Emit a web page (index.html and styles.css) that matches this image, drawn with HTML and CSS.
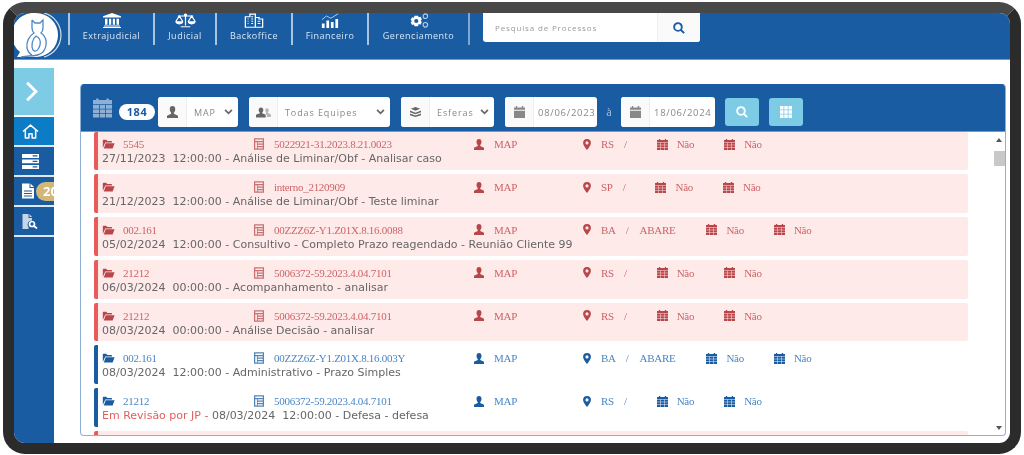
FILE: index.html
```html
<!DOCTYPE html>
<html lang="pt-BR">
<head>
<meta charset="utf-8">
<title>Processos</title>
<link rel="stylesheet" href="styles.css">
</head>
<body>
<svg class="defs" width="0" height="0" aria-hidden="true">
  <symbol id="i-folder" viewBox="0 0 16 12"><path d="M1 11V1.500C1 1 1.400.8 1.800.8h3.400l1.300 1.500h5c.5 0 .8.3.8.8v1H4L1.400 10zM2.200 11.500 4.500 5h11l-2.400 6.500z"/></symbol>
  <symbol id="i-doc" viewBox="0 0 12 14"><path fill-rule="evenodd" d="M0 0h12v14H0zM1.500 1.500v2h9v-2zM1.500 5v7.500h2V5zM4.500 5v1.500h6V5zM4.500 8v1.500h6V8zM4.500 11v1.500h6V11z"/></symbol>
  <symbol id="i-user" viewBox="0 0 12 13"><path d="M6 0c2 0 3 1.400 3 3.400 0 1.500-.7 3-1.500 3.700v1.300l4 1.800c.4.200.5.500.5 1V13H0v-1.800c0-.5.100-.8.500-1l4-1.800V7.100C3.700 6.400 3 4.900 3 3.400 3 1.400 4 0 6 0z"/></symbol>
  <symbol id="i-pin" viewBox="0 0 10 14"><path fill-rule="evenodd" d="M5 0a5 5 0 0 1 5 5c0 2.500-3 6.500-5 9-2-2.500-5-6.500-5-9a5 5 0 0 1 5-5zm0 3a2 2 0 1 0 0 4 2 2 0 0 0 0-4z"/></symbol>
  <symbol id="i-cal" viewBox="0 0 12 12"><path d="M2 0h1.500v1h5V0H10v1h2v2.600H0V1h2zM0 4.100h3.800v2.300H0zM4.300 4.100h3.400v2.300H4.300zM8.200 4.100H12v2.300H8.200zM0 6.900h3.800v2.300H0zM4.300 6.900h3.400v2.300H4.300zM8.200 6.900H12v2.300H8.200zM0 9.700h3.800V12H0zM4.300 9.700h3.400V12H4.300zM8.200 9.700H12V12H8.200z"/></symbol>
  <symbol id="i-search" viewBox="0 0 14 14"><path fill="none" stroke="currentColor" stroke-width="2.200" d="M5.800 1.300a4.500 4.500 0 1 0 0 9 4.500 4.500 0 0 0 0-9zM9 9l4 4"/></symbol>
  <symbol id="i-chev" viewBox="0 0 10 7"><path fill="none" stroke="currentColor" stroke-width="2" d="M1 1l4 4 4-4"/></symbol>
  <symbol id="i-bank" viewBox="0 0 18 18" preserveAspectRatio="none"><path d="M9 0l9 4v1.500H0V4zM2 7h2.500v7H2zM6 7h2.200v7H6zM9.800 7H12v7H9.800zM13.500 7H16v7h-2.500zM1 15h16v1.300H1zM0 16.700h18V18H0z"/></symbol>
  <symbol id="i-scale" viewBox="0 0 22 18" preserveAspectRatio="none"><path fill="none" stroke="currentColor" stroke-width="1.300" d="M11 1v14M3 3.500h16M4.500 3.500 1 10a3.500 3 0 0 0 7 0zM17.500 3.500 14 10a3.500 3 0 0 0 7 0zM6 16.500h10"/><circle cx="11" cy="2.500" r="1.800"/><path d="M1 10h7c0 4-7 4-7 0zM14 10h7c0 4-7 4-7 0z"/></symbol>
  <symbol id="i-bldg" viewBox="0 0 22 20" preserveAspectRatio="none"><path fill="none" stroke="currentColor" stroke-width="1.400" d="M1.500 19V5h5V1.500h6V19zM12.500 6h4v2h4v11h-8M4 8h1M4 11h1M4 14h1M8 5h2M8 8h2M8 11h2M8 14h2M15 11h3M15 14h3"/></symbol>
  <symbol id="i-chart" viewBox="0 0 20 20" preserveAspectRatio="none"><path d="M1 14h3v6H1zM6 10h3v10H6zM11 12h3v8h-3zM16 8h3v12h-3z"/><path fill="none" stroke="currentColor" stroke-width="1" opacity=".8" d="M1 9l5-5 5 3 8-6"/></symbol>
  <symbol id="i-gears" viewBox="1 0 20 16.500"><path fill-rule="evenodd" d="M6 3h4l.6 1.800 1.900-.6 1.700 2.800-1.400 1.500 1.400 1.500-1.700 2.800-1.900-.6L10 14.500H6l-.6-1.800-1.900.6L1.800 10.500 3.200 9 1.800 7.500l1.700-2.800 1.900.6zM8 6.500a2.300 2.300 0 1 0 0 4.600 2.300 2.300 0 0 0 0-4.600z"/><circle cx="18" cy="3.500" r="2.500" fill="none" stroke="currentColor" stroke-width="1.200" opacity=".7"/><circle cx="18" cy="13" r="2.500" fill="none" stroke="currentColor" stroke-width="1.200" opacity=".7"/></symbol>
  <symbol id="i-home" viewBox="0 0 18 16"><path fill="none" stroke="currentColor" stroke-width="1.600" stroke-linejoin="round" d="M1 8l8-6.800L17 8M3.500 6.500V15h3.800v-4.500h3.400V15h3.800V6.500"/></symbol>
  <symbol id="i-server" viewBox="0 0 16 14"><path fill-rule="evenodd" d="M0 0h16v3.600H0zM0 5h16v3.600H0zM0 10.200h16V14H0zM10 1.200v1.200h4.500V1.200zM10 6.200v1.200h4.500V6.200zM10 11.500v1.200h4.500v-1.200z"/></symbol>
  <symbol id="i-file" viewBox="0 0 12 15"><path fill-rule="evenodd" d="M0 0h7.500v4.500H12V15H0zM8.500 0 12 3.500H8.500zM2 7v1h8V7zM2 9.500v1h8v-1zM2 12v1h8v-1z"/></symbol>
  <symbol id="i-filesearch" viewBox="0 0 16 15"><path d="M0 0h6v4h3.500v2.500a4 4 0 0 0-3.500 6.500V15H0zM7 0l2.500 3H7z" opacity=".75"/><path fill="none" stroke="currentColor" stroke-width="1.700" d="M9.500 7.500a2.500 2.500 0 1 0 0 5 2.500 2.500 0 0 0 0-5zM11.500 12l3 2.500"/></symbol>
  <symbol id="i-grid" viewBox="0 0 12 12"><path d="M0 0h3.500v3.500H0zM4.250 0h3.500v3.500h-3.500zM8.500 0H12v3.500H8.500zM0 4.250h3.500v3.500H0zM4.250 4.250h3.500v3.500h-3.500zM8.500 4.250H12v3.500H8.500zM0 8.500h3.500V12H0zM4.250 8.500h3.500V12h-3.500zM8.500 8.500H12V12H8.500z"/></symbol>
  <symbol id="i-layers" viewBox="0 0 14 13"><path d="M7 0l6 2.500L7 5 1 2.500zM0 4.500l7 2.800 7-2.800v2.200L7 9.500 0 6.700zM0 8.500l7 2.500 7-2.500V10.500L7 13 0 10.500z"/></symbol>
  <symbol id="i-users" viewBox="0 0 18 13"><path d="M6 1c1.800 0 2.800 1.300 2.800 3 0 1.300-.6 2.500-1.300 3v1l3.500 1.500c.4.200.6.500.6 1V13H0v-2.500c0-.5.200-.8.600-1L4.500 8V7C3.800 6.500 3.200 5.300 3.200 4 3.200 2.300 4.200 1 6 1z"/><path opacity=".45" d="M13 2c1.500 0 2.300 1 2.300 2.500 0 1-.5 2-1 2.500v.8l3.200 1.400c.3.100.5.400.5.800V12.500h-5V10l-2-1.500 1.200-.7V7c-.5-.5-1-1.500-1-2.500C11 3 11.500 2 13 2z"/></symbol>
  <symbol id="i-calsimple" viewBox="0 0 12 13"><path d="M2 0h1.500v1.500h5V0H10v1.500h2V4H0V1.500h2zM0 5h12v8H0z"/></symbol>
</svg>

<div class="frame">
  <header class="topbar">
    <div class="logo">
      <svg viewBox="0 0 50 46" width="50" height="46" aria-hidden="true">
        <path class="logo-disc" d="M22 0a22 22 0 0 1 0 44H3l3-5A22 22 0 0 1 22 0z"/>
        <path class="logo-ring" d="M30 0a23 23 0 0 1 17 22 23 23 0 0 1-17 22"/>
        <path class="logo-owl" d="M18 7l3 3h5l3-3v8c0 3-1 4-2 5 6 4 7 12 2 19-3 3-8 4-14 4l-8 1M18 7v8c0 3 1 4 2 5-5 3-8 9-7 15 1 4 3 6 5 7M22 23c-4 3-5 10-3 14 3 3 6-1 7-5 1-4 0-7-4-9z"/>
      </svg>
    </div>
    <nav class="mainnav">
      <a class="navitem"><svg class="ni ni-bank"><use href="#i-bank"/></svg><span>Extrajudicial</span></a>
      <a class="navitem"><svg class="ni ni-scale"><use href="#i-scale"/></svg><span>Judicial</span></a>
      <a class="navitem"><svg class="ni ni-bldg"><use href="#i-bldg"/></svg><span>Backoffice</span></a>
      <a class="navitem"><svg class="ni ni-chart"><use href="#i-chart"/></svg><span>Financeiro</span></a>
      <a class="navitem"><svg class="ni ni-gears"><use href="#i-gears"/></svg><span>Gerenciamento</span></a>
    </nav>
    <div class="search">
      <span class="search-text">Pesquisa de Processos</span>
      <span class="search-btn"><svg class="i-12"><use href="#i-search"/></svg></span>
    </div>
  </header>

  <div class="body">
    <aside class="sidebar">
      <div class="toggle"><svg viewBox="0 0 14 24" width="13" height="21" aria-hidden="true"><path d="M2 2l10 10L2 22" fill="none" stroke="#fff" stroke-width="3.400"/></svg></div>
      <div class="side-item active"><svg class="si"><use href="#i-home"/></svg></div>
      <div class="side-item"><svg class="si"><use href="#i-server"/></svg></div>
      <div class="side-item"><svg class="si si-file"><use href="#i-file"/></svg><span class="side-badge">20</span></div>
      <div class="side-item"><svg class="si"><use href="#i-filesearch"/></svg></div>
      <div class="side-rest"></div>
    </aside>

    <main class="content">
      <section class="panel">
        <div class="toolbar">
          <svg class="tb-cal"><use href="#i-cal"/></svg>
          <span class="count">184</span>
          <div class="group g-map"><span class="addon"><svg class="a-i"><use href="#i-user"/></svg></span><span class="val">MAP</span><svg class="chev"><use href="#i-chev"/></svg></div>
          <div class="group g-team"><span class="addon"><svg class="a-i a-wide"><use href="#i-users"/></svg></span><span class="val">Todas Equipes</span><svg class="chev"><use href="#i-chev"/></svg></div>
          <div class="group g-esf"><span class="addon"><svg class="a-i"><use href="#i-layers"/></svg></span><span class="val">Esferas</span><svg class="chev"><use href="#i-chev"/></svg></div>
          <div class="group g-date"><span class="addon"><svg class="a-i"><use href="#i-calsimple"/></svg></span><span class="val date">08/06/2023</span></div>
          <span class="ate">à</span>
          <div class="group g-date g-date2"><span class="addon"><svg class="a-i"><use href="#i-calsimple"/></svg></span><span class="val date">18/06/2024</span></div>
          <span class="tbtn"><svg class="i-12"><use href="#i-search"/></svg></span>
          <span class="tbtn"><svg class="i-12"><use href="#i-grid"/></svg></span>
        </div>

        <div class="listwrap">
          <div class="list">
            <article class="row late">
              <div class="l1"><span class="c-proc"><svg class="ic ic-f"><use href="#i-folder"/></svg>5545</span><span class="c-num"><svg class="ic ic-d"><use href="#i-doc"/></svg>5022921-31.2023.8.21.0023</span><span class="c-user"><svg class="ic ic-u"><use href="#i-user"/></svg>MAP</span><span class="c-loc"><svg class="ic ic-p"><use href="#i-pin"/></svg>RS<i class="slash">/</i></span><span class="c-flag f1"><svg class="ic ic-c"><use href="#i-cal"/></svg>Não</span><span class="c-flag"><svg class="ic ic-c"><use href="#i-cal"/></svg>Não</span></div>
              <div class="l2">27/11/2023&nbsp; 12:00:00 - Análise de Liminar/Obf - Analisar caso</div>
            </article>
            <article class="row late">
              <div class="l1"><span class="c-proc"><svg class="ic ic-f"><use href="#i-folder"/></svg></span><span class="c-num"><svg class="ic ic-d"><use href="#i-doc"/></svg>interno_2120909</span><span class="c-user"><svg class="ic ic-u"><use href="#i-user"/></svg>MAP</span><span class="c-loc"><svg class="ic ic-p"><use href="#i-pin"/></svg>SP<i class="slash">/</i></span><span class="c-flag f1"><svg class="ic ic-c"><use href="#i-cal"/></svg>Não</span><span class="c-flag"><svg class="ic ic-c"><use href="#i-cal"/></svg>Não</span></div>
              <div class="l2">21/12/2023&nbsp; 12:00:00 - Análise de Liminar/Obf - Teste liminar</div>
            </article>
            <article class="row late">
              <div class="l1"><span class="c-proc"><svg class="ic ic-f"><use href="#i-folder"/></svg>002.161</span><span class="c-num"><svg class="ic ic-d"><use href="#i-doc"/></svg>00ZZZ6Z-Y1.Z01X.8.16.0088</span><span class="c-user"><svg class="ic ic-u"><use href="#i-user"/></svg>MAP</span><span class="c-loc"><svg class="ic ic-p"><use href="#i-pin"/></svg>BA<i class="slash">/</i><b class="city">ABARE</b></span><span class="c-flag f1"><svg class="ic ic-c"><use href="#i-cal"/></svg>Não</span><span class="c-flag"><svg class="ic ic-c"><use href="#i-cal"/></svg>Não</span></div>
              <div class="l2">05/02/2024&nbsp; 12:00:00 - Consultivo - Completo Prazo reagendado - Reunião Cliente 99</div>
            </article>
            <article class="row late">
              <div class="l1"><span class="c-proc"><svg class="ic ic-f"><use href="#i-folder"/></svg>21212</span><span class="c-num"><svg class="ic ic-d"><use href="#i-doc"/></svg>5006372-59.2023.4.04.7101</span><span class="c-user"><svg class="ic ic-u"><use href="#i-user"/></svg>MAP</span><span class="c-loc"><svg class="ic ic-p"><use href="#i-pin"/></svg>RS<i class="slash">/</i></span><span class="c-flag f1"><svg class="ic ic-c"><use href="#i-cal"/></svg>Não</span><span class="c-flag"><svg class="ic ic-c"><use href="#i-cal"/></svg>Não</span></div>
              <div class="l2">06/03/2024&nbsp; 00:00:00 - Acompanhamento - analisar</div>
            </article>
            <article class="row late">
              <div class="l1"><span class="c-proc"><svg class="ic ic-f"><use href="#i-folder"/></svg>21212</span><span class="c-num"><svg class="ic ic-d"><use href="#i-doc"/></svg>5006372-59.2023.4.04.7101</span><span class="c-user"><svg class="ic ic-u"><use href="#i-user"/></svg>MAP</span><span class="c-loc"><svg class="ic ic-p"><use href="#i-pin"/></svg>RS<i class="slash">/</i></span><span class="c-flag f1"><svg class="ic ic-c"><use href="#i-cal"/></svg>Não</span><span class="c-flag"><svg class="ic ic-c"><use href="#i-cal"/></svg>Não</span></div>
              <div class="l2">08/03/2024&nbsp; 00:00:00 - Análise Decisão - analisar</div>
            </article>
            <article class="row ok">
              <div class="l1"><span class="c-proc"><svg class="ic ic-f"><use href="#i-folder"/></svg>002.161</span><span class="c-num"><svg class="ic ic-d"><use href="#i-doc"/></svg>00ZZZ6Z-Y1.Z01X.8.16.003Y</span><span class="c-user"><svg class="ic ic-u"><use href="#i-user"/></svg>MAP</span><span class="c-loc"><svg class="ic ic-p"><use href="#i-pin"/></svg>BA<i class="slash">/</i><b class="city">ABARE</b></span><span class="c-flag f1"><svg class="ic ic-c"><use href="#i-cal"/></svg>Não</span><span class="c-flag"><svg class="ic ic-c"><use href="#i-cal"/></svg>Não</span></div>
              <div class="l2">08/03/2024&nbsp; 12:00:00 - Administrativo - Prazo Simples</div>
            </article>
            <article class="row ok">
              <div class="l1"><span class="c-proc"><svg class="ic ic-f"><use href="#i-folder"/></svg>21212</span><span class="c-num"><svg class="ic ic-d"><use href="#i-doc"/></svg>5006372-59.2023.4.04.7101</span><span class="c-user"><svg class="ic ic-u"><use href="#i-user"/></svg>MAP</span><span class="c-loc"><svg class="ic ic-p"><use href="#i-pin"/></svg>RS<i class="slash">/</i></span><span class="c-flag f1"><svg class="ic ic-c"><use href="#i-cal"/></svg>Não</span><span class="c-flag"><svg class="ic ic-c"><use href="#i-cal"/></svg>Não</span></div>
              <div class="l2"><span class="rev">Em Revisão por JP - </span>08/03/2024&nbsp; 12:00:00 - Defesa - defesa</div>
            </article>
            <article class="row late"></article>
          </div>
          <div class="scroll">
            <span class="arrow up"></span>
            <span class="thumb"></span>
            <span class="track"></span>
            <span class="arrow down"></span>
          </div>
        </div>
      </section>
    </main>
  </div>
</div>
</body>
</html>
```
FILE: styles.css
```css
* { box-sizing: border-box; }
html, body { margin: 0; height: 455px; overflow: hidden; background: #fff; }
body { padding: 2px 3px 1px 3px; font-family: "Open Sans", sans-serif; }
.defs { display: block; height: 0; }
svg { display: block; fill: currentColor; }

.frame {
  height: 452px;
  border: 11px solid #2b2b2b;
  border-top-color: #484848;
  border-radius: 22px;
  background: #fff;
  display: flex;
  flex-direction: column;
  overflow: hidden;
  filter: blur(.5px);
}

.topbar {
  height: 47px;
  flex: none;
  background: #1a5ca2;
  display: flex;
  align-items: flex-start;
  border-bottom: 1px solid #6f9bcb;
}
.logo { width: 49px; height: 46px; flex: none; overflow: hidden; }
.logo-disc { fill: #fff; }
.logo-ring { fill: none; stroke: #cfe0f2; stroke-width: 1.200; }
.logo-owl { fill: none; stroke: #4f88c4; stroke-width: 1.300; }

.mainnav { display: flex; margin-left: 5px; }
.navitem {
  height: 32px;
  border-left: 2px solid #a9c4e2;
  color: #d8e6f4;
  display: flex;
  flex-direction: column;
  align-items: center;
  font-size: 9px;
  letter-spacing: .5px;
  line-height: 12px;
}
.navitem:nth-child(1) { width: 85px; }
.navitem:nth-child(2) { width: 62px; }
.navitem:nth-child(3) { width: 76px; }
.navitem:nth-child(4) { width: 76px; }
.navitem:nth-child(5) { width: 103px; border-right: 2px solid #7fa6d2; }
.ni { color: #fff; margin-bottom: 2px; flex: none; height: 15px; }
.ni-bank { width: 18px; }
.ni-scale { width: 21px; }
.ni-bldg { width: 20px; }
.ni-chart { width: 18px; }
.ni-gears { width: 20px; }

.search {
  margin-left: 13px;
  width: 217px;
  height: 29px;
  background: #fff;
  border-radius: 0 0 3px 3px;
  display: flex;
  align-items: center;
}
.search-text { flex: 1; padding-left: 12px; font-size: 8px; letter-spacing: .85px; color: #9a9a9a; }
.search-btn { width: 43px; height: 100%; background: #fafafa; border-left: 1px solid #eee; color: #1a5ca2; display: flex; align-items: center; justify-content: center; border-radius: 0 0 3px 0; }
.i-12 { width: 12px; height: 12px; }

.body { flex: 1; display: flex; min-height: 0; }

.sidebar { width: 40px; flex: none; padding-top: 8px; display: flex; flex-direction: column; overflow: hidden; }
.toggle { height: 47px; background: #7ecbe6; display: flex; align-items: center; justify-content: center; padding-right: 5px; margin-bottom: 2px; flex: none; }
.side-item { height: 30px; flex: none; background: #1a5ca2; border-bottom: 2px solid #dfe8f2; color: #fff; display: flex; align-items: center; padding-left: 8px; position: relative; }
.side-item.active { background: #0d7cc6; }
.side-rest { flex: 1; background: #1a5ca2; }
.si { width: 17px; height: 15px; }
.si-file { width: 12px; height: 16px; }
.side-badge { position: absolute; left: 22px; top: 5px; width: 34px; height: 19px; border-radius: 10px; background: #d2b878; color: #fff; font-size: 13px; font-weight: 700; line-height: 19px; padding-left: 7px; }

.content { flex: 1; padding: 24px 4px 7px 26px; min-width: 0; }
.panel { height: 100%; border: 1px solid #8fb0d6; border-top: 0; border-radius: 4px; overflow: hidden; display: flex; flex-direction: column; }

.toolbar { height: 48px; flex: none; background: #1a5ca2; display: flex; align-items: flex-start; padding: 13px 0 0 12px; border-bottom: 1px solid #6f9bcb; }
.tb-cal { width: 19px; height: 20px; color: #8fb0d6; margin-top: 1px; }
.count { margin: 7px 3px 0 7px; width: 36px; height: 16px; border-radius: 8px; background: #fff; color: #1a5ca2; font-size: 11px; font-weight: 700; line-height: 16px; text-align: center; letter-spacing: .6px; }
.group { height: 30px; background: #fff; border-radius: 3px; display: flex; align-items: center; color: #888; font-size: 9px; letter-spacing: .9px; margin-right: 11px; flex: none; }
.addon { width: 29px; height: 100%; background: #fafafa; border-right: 1px solid #eee; border-radius: 3px 0 0 3px; display: flex; align-items: center; justify-content: center; color: #666; flex: none; }
.a-i { width: 11px; height: 12px; }
.a-wide { width: 15px; }
.val { flex: 1; padding-left: 7px; }
.chev { width: 9px; height: 6px; color: #666; margin-right: 5px; }
.g-map { width: 80px; }
.g-team { width: 141px; }
.g-esf { width: 93px; }
.g-date { width: 92px; margin-right: 0; }
.g-date .addon { color: #888; }
.g-date2 { width: 94px; margin-right: 10px; }
.date { padding-left: 4px; font-size: 9.500px; letter-spacing: .7px; }
.ate { color: #a9c4e2; width: 24px; text-align: center; font-size: 10px; margin-top: 8px; }
.tbtn { width: 34px; height: 28px; margin: 1px 10px 0 0; background: #7ecbe6; border-radius: 3px; color: #fff; display: flex; align-items: center; justify-content: center; flex: none; }

.listwrap { flex: 1; min-height: 0; display: flex; }
.list { flex: 1; min-width: 0; padding: 0 25px 0 13px; display: flex; flex-direction: column; gap: 4px; overflow: hidden; }
.row { flex: none; height: 38.850px; border-left: 4px solid; border-radius: 2px; padding: 5px 0 0 4px; }
.row:first-child { height: 38px; padding-top: 4px; }
.row.late { background: #ffeaea; border-color: #e95b5b; color: #cc6468; }
.row.late .ic { color: #b9474a; }
.row.ok { border-color: #1a5ca2; color: #4a86c4; }
.row.ok .ic { color: #1a5ca2; }
.row .ic-d { opacity: .75; }

.l1 { display: flex; align-items: center; height: 16px; font-family: "Liberation Serif", serif; font-size: 11px; letter-spacing: -.28px; white-space: nowrap; }
.l1 span { display: flex; align-items: center; flex: none; }
.c-proc { width: 152px; }
.c-num { width: 220px; }
.c-user { width: 109px; }
.c-loc { margin-right: 19px; }
.city { font-weight: 400; margin-right: 12px; }
.f1 { margin-right: 30px; }
.ic { flex: none; }
.ic-f { width: 13px; height: 10px; margin-right: 8px; }
.ic-d { width: 10px; height: 12px; margin-right: 10px; }
.ic-u { width: 10px; height: 11px; margin-right: 10px; }
.ic-p { width: 8px; height: 11px; margin-right: 10px; }
.ic-c { width: 11px; height: 11px; margin-right: 9px; }
.slash { font-style: normal; margin: 0 11px 0 10px; }
.l2 { font-family: "DejaVu Sans", sans-serif; font-size: 11px; line-height: 13px; color: #666; white-space: nowrap; }
.rev { color: #e0605f; }

.scroll { width: 12px; flex: none; display: flex; flex-direction: column; align-items: center; padding: 6px 0 5px; }
.arrow { width: 0; height: 0; border-left: 3.500px solid transparent; border-right: 3.500px solid transparent; flex: none; }
.arrow.up { border-bottom: 4px solid #555; }
.arrow.down { border-top: 4px solid #555; }
.thumb { width: 11px; height: 15px; background: #c8c8c8; margin-top: 9px; flex: none; }
.track { flex: 1; }
```
